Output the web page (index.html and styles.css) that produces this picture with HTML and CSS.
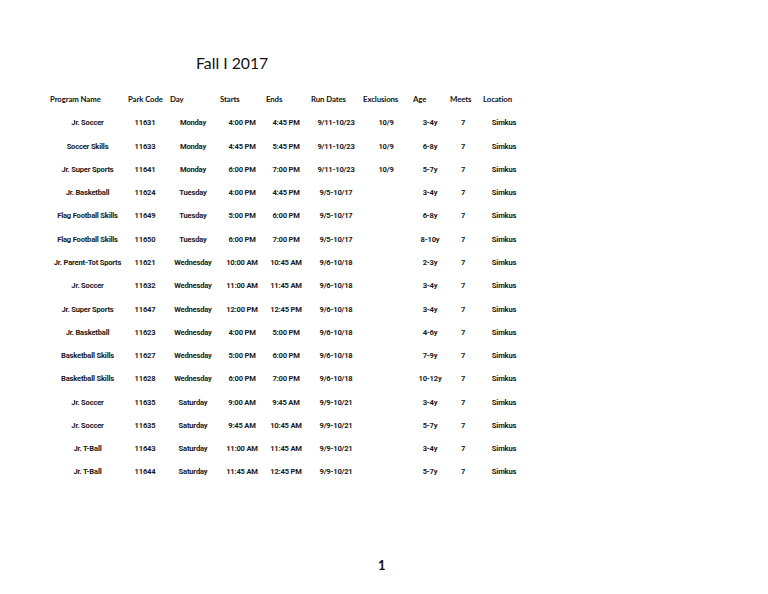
FILE: index.html
```html
<!DOCTYPE html>
<html>
<head>
<meta charset="utf-8">
<link rel="stylesheet" href="styles.css">
</head>
<body>
<div class="page">
  <h1 class="title">Fall I 2017</h1>
  <div class="table">
    <div class="row head">
      <div class="h h1">Program Name</div>
      <div class="h h2">Park Code</div>
      <div class="h h3">Day</div>
      <div class="h h4">Starts</div>
      <div class="h h5">Ends</div>
      <div class="h h6">Run Dates</div>
      <div class="h h7">Exclusions</div>
      <div class="h h8">Age</div>
      <div class="h h9">Meets</div>
      <div class="h h10">Location</div>
    </div>
    <div class="row"><div>Jr. Soccer</div><div>11631</div><div>Monday</div><div>4:00 PM</div><div>4:45 PM</div><div>9/11-10/23</div><div>10/9</div><div>3-4y</div><div>7</div><div>Simkus</div></div>
    <div class="row"><div>Soccer Skills</div><div>11633</div><div>Monday</div><div>4:45 PM</div><div>5:45 PM</div><div>9/11-10/23</div><div>10/9</div><div>6-8y</div><div>7</div><div>Simkus</div></div>
    <div class="row"><div>Jr. Super Sports</div><div>11641</div><div>Monday</div><div>6:00 PM</div><div>7:00 PM</div><div>9/11-10/23</div><div>10/9</div><div>5-7y</div><div>7</div><div>Simkus</div></div>
    <div class="row"><div>Jr. Basketball</div><div>11624</div><div>Tuesday</div><div>4:00 PM</div><div>4:45 PM</div><div>9/5-10/17</div><div></div><div>3-4y</div><div>7</div><div>Simkus</div></div>
    <div class="row"><div>Flag Football Skills</div><div>11649</div><div>Tuesday</div><div>5:00 PM</div><div>6:00 PM</div><div>9/5-10/17</div><div></div><div>6-8y</div><div>7</div><div>Simkus</div></div>
    <div class="row"><div>Flag Football Skills</div><div>11650</div><div>Tuesday</div><div>6:00 PM</div><div>7:00 PM</div><div>9/5-10/17</div><div></div><div>8-10y</div><div>7</div><div>Simkus</div></div>
    <div class="row"><div>Jr. Parent-Tot Sports</div><div>11621</div><div>Wednesday</div><div>10:00 AM</div><div>10:45 AM</div><div>9/6-10/18</div><div></div><div>2-3y</div><div>7</div><div>Simkus</div></div>
    <div class="row"><div>Jr. Soccer</div><div>11632</div><div>Wednesday</div><div>11:00 AM</div><div>11:45 AM</div><div>9/6-10/18</div><div></div><div>3-4y</div><div>7</div><div>Simkus</div></div>
    <div class="row"><div>Jr. Super Sports</div><div>11647</div><div>Wednesday</div><div>12:00 PM</div><div>12:45 PM</div><div>9/6-10/18</div><div></div><div>3-4y</div><div>7</div><div>Simkus</div></div>
    <div class="row"><div>Jr. Basketball</div><div>11623</div><div>Wednesday</div><div>4:00 PM</div><div>5:00 PM</div><div>9/6-10/18</div><div></div><div>4-6y</div><div>7</div><div>Simkus</div></div>
    <div class="row"><div>Basketball Skills</div><div>11627</div><div>Wednesday</div><div>5:00 PM</div><div>6:00 PM</div><div>9/6-10/18</div><div></div><div>7-9y</div><div>7</div><div>Simkus</div></div>
    <div class="row"><div>Basketball Skills</div><div>11628</div><div>Wednesday</div><div>6:00 PM</div><div>7:00 PM</div><div>9/6-10/18</div><div></div><div>10-12y</div><div>7</div><div>Simkus</div></div>
    <div class="row"><div>Jr. Soccer</div><div>11635</div><div>Saturday</div><div>9:00 AM</div><div>9:45 AM</div><div>9/9-10/21</div><div></div><div>3-4y</div><div>7</div><div>Simkus</div></div>
    <div class="row"><div>Jr. Soccer</div><div>11635</div><div>Saturday</div><div>9:45 AM</div><div>10:45 AM</div><div>9/9-10/21</div><div></div><div>5-7y</div><div>7</div><div>Simkus</div></div>
    <div class="row"><div>Jr. T-Ball</div><div>11643</div><div>Saturday</div><div>11:00 AM</div><div>11:45 AM</div><div>9/9-10/21</div><div></div><div>3-4y</div><div>7</div><div>Simkus</div></div>
    <div class="row"><div>Jr. T-Ball</div><div>11644</div><div>Saturday</div><div>11:45 AM</div><div>12:45 PM</div><div>9/9-10/21</div><div></div><div>5-7y</div><div>7</div><div>Simkus</div></div>
  </div>
  <div class="pagenum">1</div>
</div>
</body>
</html>
```

FILE: styles.css
```css
html, body {
  margin: 0;
  padding: 0;
  background: #ffffff;
}
.page {
  width: 768px;
  height: 594px;
  padding-top: 52px;
  box-sizing: border-box;
  color: #111111;
}
.title {
  margin: 0 0 0 196px;
  font-family: "Lato", "Open Sans", sans-serif;
  font-weight: 400;
  font-size: 15.8px;
  line-height: 22px;
  height: 22px;
}
.table {
  margin-top: 13px;
  margin-left: 50px;
}
.row {
  display: grid;
  grid-template-columns: 75px 40px 56px 42px 46px 54px 46px 42px 24px 58px;
  height: 23.27px;
  align-items: center;
  font-family: "Roboto", "Liberation Sans", sans-serif;
  font-weight: 700;
  font-size: 7.6px;
  letter-spacing: -0.2px;
  color: #1a1a1a;
  text-align: center;
  white-space: nowrap;
}
.row.head {
  height: 24.27px;
}
.row > div {
  overflow: visible;
}
.head .h {
  font-family: "Lato", "Open Sans", sans-serif;
  font-weight: 700;
  font-size: 7.8px;
  text-align: left;
  letter-spacing: -0.1px;
  color: #111111;
}
.h1 { padding-left: 0; }
.h2 { padding-left: 3px; }
.h3 { padding-left: 5px; }
.h4 { margin-left: -1px; }
.h5 { padding-left: 3px; }
.h6 { padding-left: 2px; }
.h7 { padding-left: 0; }
.h8 { padding-left: 4px; }
.h9 { margin-left: -1px; }
.h10 { padding-left: 8px; }
.pagenum {
  margin-top: 73px;
  margin-left: 378px;
  font-family: "Lato", "Open Sans", sans-serif;
  font-weight: 700;
  font-size: 13px;
  line-height: 16px;
}
```
